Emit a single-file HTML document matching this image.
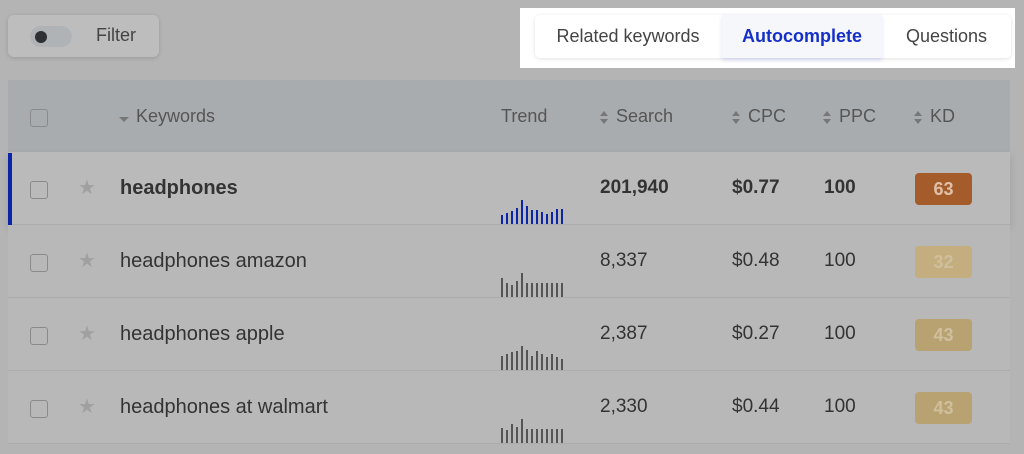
<!DOCTYPE html><html><head><style>
body{margin:0;width:1024px;height:454px;background:#b4b4b4;font-family:"Liberation Sans",Arial,sans-serif;position:relative;overflow:hidden;color:#333}
.a{position:absolute}
.filter{left:8px;top:15px;width:151px;height:42px;background:#bdbdbd;border-radius:6px;box-shadow:0 1px 4px rgba(0,0,0,.15)}
.tog{left:30px;top:26px;width:42px;height:21px;border-radius:11px;background:#b0b3b6}
.dot{left:35px;top:31px;width:12px;height:12px;border-radius:50%;background:#2e3033}
.white{left:520px;top:8px;width:495px;height:60px;background:#fff}
.tabs{left:535px;top:15px;width:476px;height:43px;background:#fff;border-radius:5px;box-shadow:0 1px 4px rgba(0,0,0,.12);font-size:18px;color:#444}
.tab{position:absolute;top:0;height:43px;line-height:43px;text-align:center}
.head{left:8px;top:80px;width:1002px;height:72px;background:#a9acaf}
.row{left:8px;width:1002px;height:72px;background:#b8b8b8;border-bottom:1px solid #acacac}
.t{position:absolute;font-size:20px;white-space:nowrap}
.n{font-size:19px}
.cb{position:absolute;width:16px;height:16px;border:1.5px solid #8a8a8a;border-radius:3px}
.kd{position:absolute;left:915px;width:57px;height:32px;border-radius:4px;color:#d0bf9c;font-weight:bold;font-size:18px;text-align:center;line-height:32px}
.h{font-size:18px;color:#555}
</style></head><body>
<div class="a filter"></div><div class="a tog"></div><div class="a dot"></div>
<div class="t" style="left:96px;top:25px;font-size:18px;color:#444">Filter</div>
<div class="a white"></div>
<div class="a tabs">
<div class="tab" style="left:0;width:186px">Related keywords</div>
<div class="tab" style="left:187px;width:160px;background:#f6f7fb;box-shadow:0 2px 4px rgba(40,60,220,.15);color:#1530c8;font-weight:bold">Autocomplete</div>
<div class="tab" style="left:347px;width:129px">Questions</div>
</div>
<div class="a head"></div>
<div class="cb" style="left:30px;top:109px"></div>
<div class="t h" style="left:136px;top:106px">Keywords</div>
<div class="t h" style="left:501px;top:106px">Trend</div>
<div class="t h" style="left:616px;top:106px">Search</div>
<div class="t h" style="left:748px;top:106px">CPC</div>
<div class="t h" style="left:839px;top:106px">PPC</div>
<div class="t h" style="left:930px;top:106px">KD</div>
<svg class="a" style="left:0;top:0" width="1024" height="160"><g fill="#777">
<path d="M119 117h10l-5 5z"/>
<path d="M600 116l4-5 4 5zM600 119l4 5 4-5z"/>
<path d="M732 116l4-5 4 5zM732 119l4 5 4-5z"/>
<path d="M823 116l4-5 4 5zM823 119l4 5 4-5z"/>
<path d="M914 116l4-5 4 5zM914 119l4 5 4-5z"/>
</g></svg>

<div class="a row" style="top:152px;background:#bababa;box-shadow:0 4px 8px rgba(0,0,0,.12)"></div>
<div class="a" style="left:8px;top:153px;width:4px;height:72px;background:#0a25a8"></div>
<div class="a row" style="top:225px"></div>
<div class="a row" style="top:298px"></div>
<div class="a row" style="top:371px"></div>

<div class="cb" style="left:30px;top:181px"></div><div class="t" style="left:78px;top:175px;color:#a0a0a0;font-size:20px">★</div>
<div class="t" style="left:120px;top:177px;font-weight:bold">headphones</div>
<div class="t n" style="left:600px;top:177px;font-weight:bold">201,940</div>
<div class="t n" style="left:732px;top:177px;font-weight:bold">$0.77</div>
<div class="t n" style="left:824px;top:177px;font-weight:bold">100</div>
<div class="kd" style="top:173px;background:#a55c2b;color:#e0c0a8">63</div>

<div class="cb" style="left:30px;top:254px"></div><div class="t" style="left:78px;top:248px;color:#a0a0a0;font-size:20px">★</div>
<div class="t" style="left:120px;top:250px">headphones amazon</div>
<div class="t n" style="left:600px;top:250px">8,337</div>
<div class="t n" style="left:732px;top:250px">$0.48</div>
<div class="t n" style="left:824px;top:250px">100</div>
<div class="kd" style="top:246px;background:#c4ad7e">32</div>

<div class="cb" style="left:30px;top:327px"></div><div class="t" style="left:78px;top:321px;color:#a0a0a0;font-size:20px">★</div>
<div class="t" style="left:120px;top:323px">headphones apple</div>
<div class="t n" style="left:600px;top:323px">2,387</div>
<div class="t n" style="left:732px;top:323px">$0.27</div>
<div class="t n" style="left:824px;top:323px">100</div>
<div class="kd" style="top:319px;background:#b8a272">43</div>

<div class="cb" style="left:30px;top:400px"></div><div class="t" style="left:78px;top:394px;color:#a0a0a0;font-size:20px">★</div>
<div class="t" style="left:120px;top:396px">headphones at walmart</div>
<div class="t n" style="left:600px;top:396px">2,330</div>
<div class="t n" style="left:732px;top:396px">$0.44</div>
<div class="t n" style="left:824px;top:396px">100</div>
<div class="kd" style="top:392px;background:#b8a272">43</div>

<svg class="a" style="left:0;top:0" width="1024" height="454">
<g stroke="#0a25a8" stroke-width="2">
<path d="M502 224v-9M507 224v-11M512 224v-13M517 224v-16M522 224v-24M527 224v-18M532 224v-14M537 224v-14M542 224v-12M547 224v-10M552 224v-12M557 224v-15M562 224v-15"/></g>
<g stroke="#555" stroke-width="2">
<path d="M502 297v-19M507 297v-14M512 297v-12M517 297v-16M522 297v-24M527 297v-14M532 297v-14M537 297v-14M542 297v-14M547 297v-14M552 297v-14M557 297v-14M562 297v-14"/>
<path d="M502 370v-14M507 370v-16M512 370v-18M517 370v-19M522 370v-24M527 370v-20M532 370v-14M537 370v-19M542 370v-16M547 370v-13M552 370v-16M557 370v-13M562 370v-11"/>
<path d="M502 443v-15M507 443v-13M512 443v-19M517 443v-16M522 443v-24M527 443v-14M532 443v-14M537 443v-14M542 443v-14M547 443v-14M552 443v-14M557 443v-14M562 443v-14"/>
</g></svg>
</body></html>
